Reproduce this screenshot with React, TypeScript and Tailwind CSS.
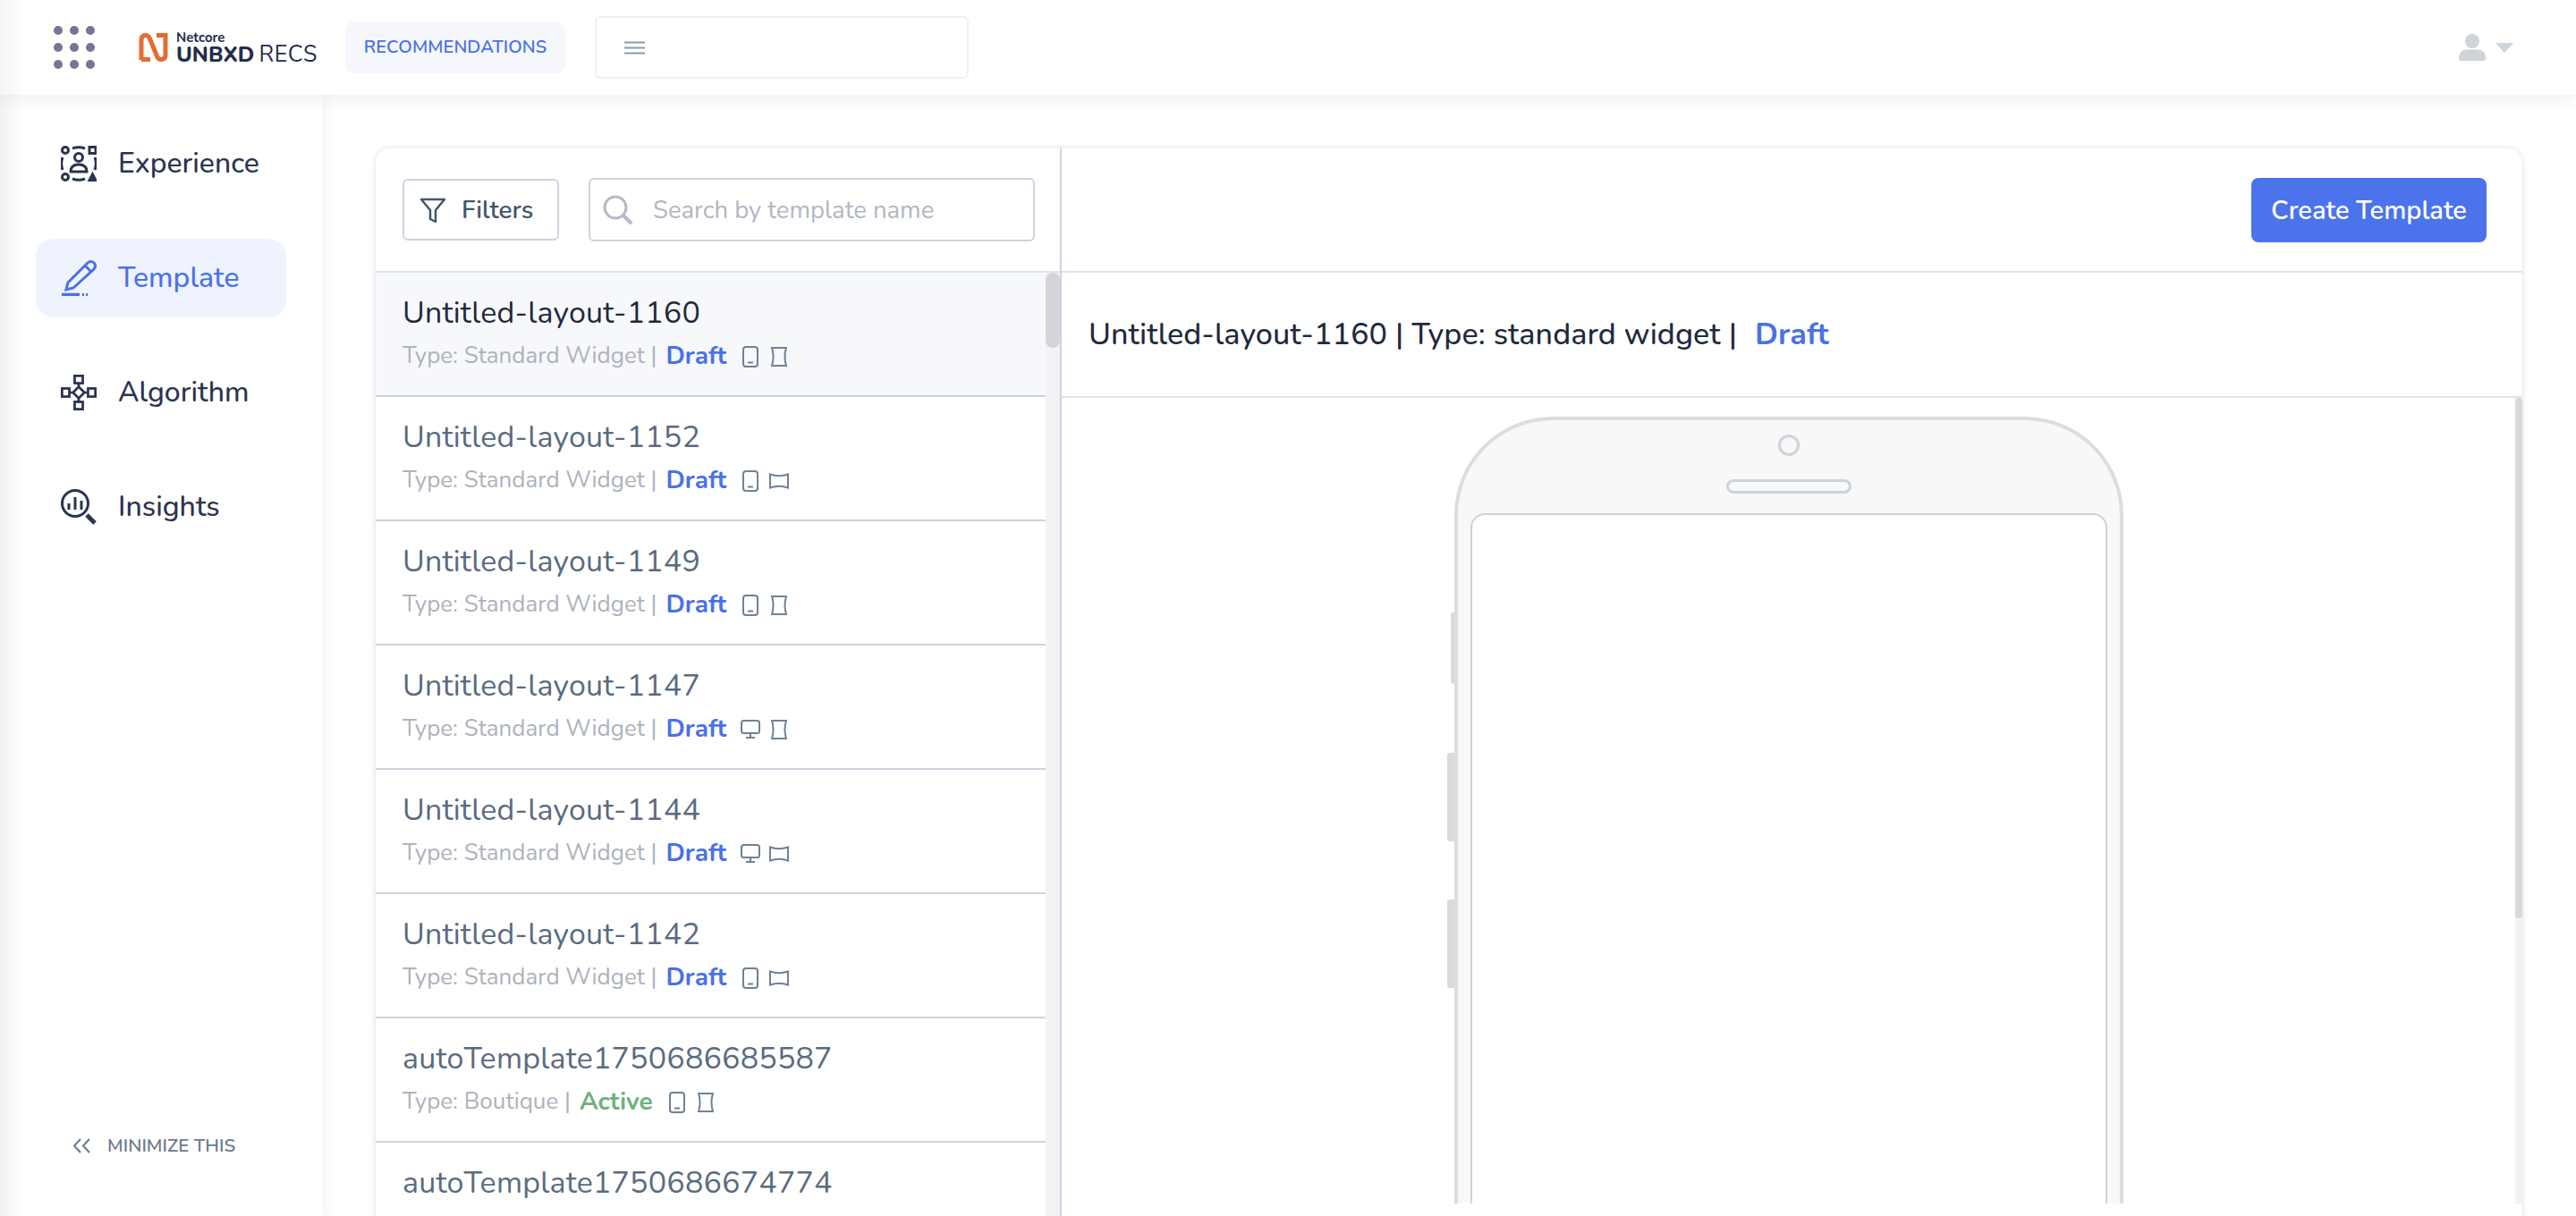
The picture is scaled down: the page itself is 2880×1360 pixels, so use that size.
const FONT = "font-['Nunito','Lato','Noto_Sans',sans-serif]";

type Screen = "mobile" | "desktop";
type Shape = "portrait" | "landscape";

type Template = {
  name: string;
  type: string;
  status: "Draft" | "Active";
  screen: Screen;
  shape: Shape;
};

const templates: Template[] = [
  { name: "Untitled-layout-1160", type: "Standard Widget", status: "Draft", screen: "mobile", shape: "portrait" },
  { name: "Untitled-layout-1152", type: "Standard Widget", status: "Draft", screen: "mobile", shape: "landscape" },
  { name: "Untitled-layout-1149", type: "Standard Widget", status: "Draft", screen: "mobile", shape: "portrait" },
  { name: "Untitled-layout-1147", type: "Standard Widget", status: "Draft", screen: "desktop", shape: "portrait" },
  { name: "Untitled-layout-1144", type: "Standard Widget", status: "Draft", screen: "desktop", shape: "landscape" },
  { name: "Untitled-layout-1142", type: "Standard Widget", status: "Draft", screen: "mobile", shape: "landscape" },
  { name: "autoTemplate1750686685587", type: "Boutique", status: "Active", screen: "mobile", shape: "portrait" },
  { name: "autoTemplate1750686674774", type: "Boutique", status: "Active", screen: "mobile", shape: "portrait" },
];

function ScreenIcon({ screen }: { screen: Screen }) {
  if (screen === "desktop") {
    return (
      <svg width="22" height="22" viewBox="0 0 22 22" fill="none" stroke="#6f8196" strokeWidth="2">
        <rect x="1" y="1" width="20" height="14" rx="2.500" />
        <path d="M11 15v4M6 20h10" />
      </svg>
    );
  }
  return (
    <svg width="18" height="24" viewBox="0 0 18 24" fill="none" stroke="#6f8196" strokeWidth="2">
      <rect x="1" y="1" width="16" height="22" rx="3" />
      <path d="M6 18.500h6" />
    </svg>
  );
}

function ShapeIcon({ shape }: { shape: Shape }) {
  if (shape === "landscape") {
    return (
      <svg width="22" height="18" viewBox="0 0 22 18" fill="none" stroke="#6f8196" strokeWidth="2">
        <path d="M1 1.500C7 3.500 15 3.500 21 1.500V16.500C15 14.500 7 14.500 1 16.500Z" />
      </svg>
    );
  }
  return (
    <svg width="18" height="22" viewBox="0 0 18 22" fill="none" stroke="#6f8196" strokeWidth="2">
      <path d="M1 1H17C15 7.500 15 14.500 17 21H1C3 14.500 3 7.500 1 1Z" />
    </svg>
  );
}

function TemplateRow({ item, active }: { item: Template; active: boolean }) {
  return (
    <div className={`h-[139px] shrink-0 border-b-2 border-[#cdd3e0] px-[30px] pt-[21px] ${active ? "bg-[#f7f8fb]" : "bg-white"}`}>
      <div className={`text-[34px] leading-[48px] tracking-[0.2px] ${active ? "text-[#1f2a3d]" : "text-[#5a6b80]"}`}>{item.name}</div>
      <div className="mt-[6px] flex items-center text-[26px] leading-[36px] text-[#adb2bd]">
        <span>Type: {item.type} |</span>
        <span className={`ml-[10px] text-[28px] font-bold ${item.status === "Draft" ? "text-[#4a70e8]" : "text-[#6fb07f]"}`}>{item.status}</span>
        <span className="ml-[16px] flex items-center gap-[10px] pt-[2px]">
          <span className="flex w-[22px] justify-center">
            <ScreenIcon screen={item.screen} />
          </span>
          <span className="flex w-[22px] justify-center">
            <ShapeIcon shape={item.shape} />
          </span>
        </span>
      </div>
    </div>
  );
}

function GridDots() {
  return (
    <div className="grid grid-cols-3 gap-x-[8px] gap-y-[9px]">
      {Array.from({ length: 9 }).map((_, i) => (
        <span key={i} className="h-[10px] w-[10px] rounded-full bg-[#737695]" />
      ))}
    </div>
  );
}

function Logo() {
  return (
    <div className="flex w-[200px] items-center gap-[9px]">
      <svg width="33" height="32" viewBox="0 0 33 32" fill="none" stroke="#e66a34" strokeWidth="5" className="shrink-0">
        <path d="M3 30V8C3 4 5 2.500 8 2.500C10 2.500 11.500 4 12.500 6L20.500 26C21.500 28.500 23 29.500 25 29.500C28 29.500 30 28 30 24V2.500H20M13 29.500H3" />
      </svg>
      <div className="flex flex-col text-[#232d4b]">
        <span className="text-[15px] leading-[15px] font-bold">Netcore</span>
        <span className="flex whitespace-nowrap text-[24px] leading-[22px]">
          <span className="font-extrabold">UNBXD</span>
          <span className="ml-[5px] text-[25px] font-normal tracking-[0.6px]">RECS</span>
        </span>
      </div>
    </div>
  );
}

function Topbar() {
  return (
    <header className="relative z-20 flex h-[106px] shrink-0 items-center bg-gradient-to-r from-[#f4f5f6] from-0% to-white to-[1%] shadow-[0_6px_16px_rgba(0,0,0,0.06)]">
      <div className="ml-[60px]">
        <GridDots />
      </div>
      <div className="ml-[49px]">
        <Logo />
      </div>
      <div className="ml-[31px] flex h-[58px] w-[246px] items-center justify-center rounded-[10px] bg-[#f6f7fd] text-[20px] font-semibold tracking-[0.1px] text-[#4a70e8]">
        RECOMMENDATIONS
      </div>
      <div className="ml-[33px] flex h-[70px] w-[418px] items-center rounded-[6px] border-2 border-[#eef0f5] bg-white pl-[31px]">
        <svg width="23" height="15" viewBox="0 0 23 15" stroke="#8b9aa8" strokeWidth="2">
          <path d="M0 1.500h23M0 7.500h23M0 13.500h23" />
        </svg>
      </div>
      <div className="ml-auto mr-[70px] flex items-center gap-[11px]">
        <svg width="30" height="30" viewBox="0 0 30 30" fill="#cdd4da">
          <circle cx="15" cy="8" r="8" />
          <path d="M0 27C0 21 4 17.500 9 17.500H21C26 17.500 30 21 30 27C30 29 29 30 27 30H3C1 30 0 29 0 27Z" />
        </svg>
        <svg width="20" height="11" viewBox="0 0 20 11" fill="#cdd4da">
          <path d="M0 0H20L10 11Z" />
        </svg>
      </div>
    </header>
  );
}

function ExperienceIcon() {
  return (
    <svg width="40" height="40" viewBox="0 0 40 40" fill="none" stroke="currentColor" strokeWidth="3">
      <circle cx="5" cy="5" r="3.500" />
      <rect x="32" y="1.500" width="7" height="7" />
      <circle cx="5" cy="35" r="3.500" />
      <path d="M35.500 32L39 38.500H32Z" fill="currentColor" />
      <path d="M13 3C17 1.500 23 1.500 27 3M2 13C0.500 17 0.500 23 2 27M38 13C39.500 17 39.500 23 38 27M13 37C17 38.500 23 38.500 27 37" />
      <circle cx="20" cy="13" r="4.500" />
      <path d="M11 29C11 23 15 21 20 21C25 21 29 23 29 29Z" />
    </svg>
  );
}

function PencilIcon() {
  return (
    <svg width="40" height="40" viewBox="0 0 40 40" fill="none" stroke="currentColor" strokeWidth="3">
      <path d="M30 3C32 1 35 1 37 3C39 5 39 7.500 37 10L14 31L6 33L8 25Z" />
      <path d="M27 6L34 13" />
      <path d="M1 38.500H21" strokeWidth="3.500" />
      <path d="M24 38.500H32" strokeWidth="3" strokeDasharray="2 2" />
    </svg>
  );
}

function AlgorithmIcon() {
  return (
    <svg width="44" height="44" viewBox="0 0 44 44" fill="none" stroke="currentColor" strokeWidth="3">
      <rect x="17" y="1.500" width="10" height="9" />
      <rect x="17" y="33.500" width="10" height="9" />
      <rect x="1.500" y="17" width="9" height="10" />
      <rect x="33.500" y="17" width="9" height="10" />
      <path d="M22 15L29 22L22 29L15 22Z" />
      <path d="M22 10.500V15M22 29V33.500M10.500 22H15M29 22H33.500" />
    </svg>
  );
}

function InsightsIcon() {
  return (
    <svg width="40" height="40" viewBox="0 0 40 40" fill="none" stroke="currentColor" strokeWidth="3">
      <circle cx="16" cy="16" r="14.500" />
      <path d="M9 16V23M16 9V23M23 13V23" />
      <path d="M29 29L38 38" strokeWidth="5" />
    </svg>
  );
}

const navItems = [
  { label: "Experience", icon: <ExperienceIcon /> },
  { label: "Template", icon: <PencilIcon />, active: true },
  { label: "Algorithm", icon: <AlgorithmIcon /> },
  { label: "Insights", icon: <InsightsIcon /> },
];

function Sidebar() {
  return (
    <aside className="relative z-10 flex w-[360px] shrink-0 flex-col bg-gradient-to-r from-[#f0f1f3] from-0% to-white to-[7%] px-[40px] shadow-[4px_0_18px_rgba(0,0,0,0.05)]">
      <nav className="mt-[33px] flex flex-col gap-[40px]">
        {navItems.map((item) => (
          <div
            key={item.label}
            className={`flex h-[88px] items-center gap-[24px] rounded-[20px] pl-[28px] text-[32px] font-medium ${
              item.active ? "bg-[#eef3fe] text-[#4a70e8]" : "text-[#2a3450]"
            }`}
          >
            <span className="flex w-[40px] items-center justify-center">{item.icon}</span>
            {item.label}
          </div>
        ))}
      </nav>
      <div className="mb-[63px] mt-auto flex items-center gap-[18px] pl-[41px] text-[20.5px] font-semibold text-[#6b7a8c]">
        <svg width="21" height="17" viewBox="0 0 21 17" fill="none" stroke="currentColor" strokeWidth="2">
          <path d="M9 1L2 8.500L9 16M19 1L12 8.500L19 16" />
        </svg>
        MINIMIZE THIS
      </div>
    </aside>
  );
}

function PhoneMockup() {
  return (
    <svg width="772" height="882" viewBox="0 0 772 882" fill="none" className="shrink-0">
      <rect x="8" y="221" width="8" height="80" rx="3" fill="#d9dadc" />
      <rect x="4" y="378" width="12" height="99" rx="3" fill="#d9dadc" />
      <rect x="4" y="542" width="12" height="99" rx="3" fill="#d9dadc" />
      <path d="M14 882V112A108 108 0 0 1 122 4H650A108 108 0 0 1 758 112V882" fill="#f8f8f8" stroke="#dcdddf" strokeWidth="4" />
      <path d="M31 882V126A15 15 0 0 1 46 111H726A15 15 0 0 1 741 126V882" fill="white" stroke="#cbd2dd" strokeWidth="2" />
      <circle cx="386" cy="34" r="10.500" stroke="#ccd3dd" strokeWidth="3" />
      <rect x="317.500" y="73.500" width="137" height="13" rx="6.500" stroke="#ccd3dd" strokeWidth="3" />
    </svg>
  );
}

export default function App() {
  return (
    <div className={`flex h-[1360px] w-[2880px] flex-col overflow-hidden bg-white ${FONT}`}>
      <Topbar />
      <div className="flex min-h-0 flex-1">
        <Sidebar />
        <main className="min-w-0 flex-1 pl-[60px] pr-[60px] pt-[60px]">
          <div className="flex h-[1250px] rounded-t-[16px] bg-white shadow-[0_0_6px_rgba(60,70,120,0.18)]">
            {/* ---------- LIST ---------- */}
            <section className="flex w-[767px] shrink-0 flex-col border-r-2 border-[#cdd3e0]">
              <div className="flex h-[139px] shrink-0 items-center gap-[33px] border-b-2 border-[#dfe3ee] pl-[30px] pr-[28px]">
                <button className="flex h-[69px] w-[175px] items-center gap-[17px] rounded-[6px] border-2 border-[#cdd3e0] pl-[17px] text-[28px] font-semibold text-[#44566a]">
                  <svg width="30" height="30" viewBox="0 0 30 30" fill="none" stroke="#44566a" strokeWidth="2.500" strokeLinejoin="round">
                    <path d="M2 3H28L18 15V28L12 25V15Z" />
                  </svg>
                  Filters
                </button>
                <div className="flex h-[71px] flex-1 items-center rounded-[6px] border-2 border-[#cdd3e0] pl-[14px] text-[27.5px] text-[#b0b7c3]">
                  <svg width="34" height="34" viewBox="0 0 34 34" fill="none" stroke="#b4bac8" strokeWidth="3">
                    <circle cx="14" cy="14" r="12" />
                    <path d="M23 23L32 32" strokeWidth="4" />
                  </svg>
                  <span className="ml-[22px] pt-[2px]">Search by template name</span>
                </div>
              </div>
              <div className="flex min-h-0 flex-1">
                <div className="flex min-w-0 flex-1 flex-col overflow-hidden">
                  {templates.map((item, i) => (
                    <TemplateRow key={item.name} item={item} active={i === 0} />
                  ))}
                </div>
                <div className="w-[16px] shrink-0 bg-[#f1f3f5]">
                  <div className="h-[84px] w-full rounded-full bg-[#d3d5d8]" />
                </div>
              </div>
            </section>
            {/* ---------- PREVIEW ---------- */}
            <section className="flex min-w-0 flex-1 flex-col">
              <div className="flex h-[139px] shrink-0 items-center justify-end border-b-2 border-[#dfe3ee] pr-[40px]">
                <button className="flex h-[72px] w-[263px] items-center justify-center rounded-[8px] bg-[#4b73eb] pt-[2px] text-[29px] font-semibold text-white">
                  Create Template
                </button>
              </div>
              <div className="flex h-[140px] shrink-0 items-center border-b-2 border-[#dfe3ee] pl-[30px] text-[34px] font-medium tracking-[0.12px] text-[#1f2a3d]">
                Untitled-layout-1160 | Type: standard widget |
                <span className="ml-[20px] font-bold text-[#4a70e8]">Draft</span>
              </div>
              <div className="flex min-h-0 flex-1 items-start">
                <div className="flex min-w-0 flex-1 justify-center overflow-hidden pt-[19px]">
                  <PhoneMockup />
                </div>
                <div className="h-[901px] w-[8px] shrink-0 bg-[#f1f2f3]">
                  <div className="h-[582px] rounded-full bg-[#d8d8d8]" />
                </div>
              </div>
            </section>
          </div>
        </main>
      </div>
    </div>
  );
}
